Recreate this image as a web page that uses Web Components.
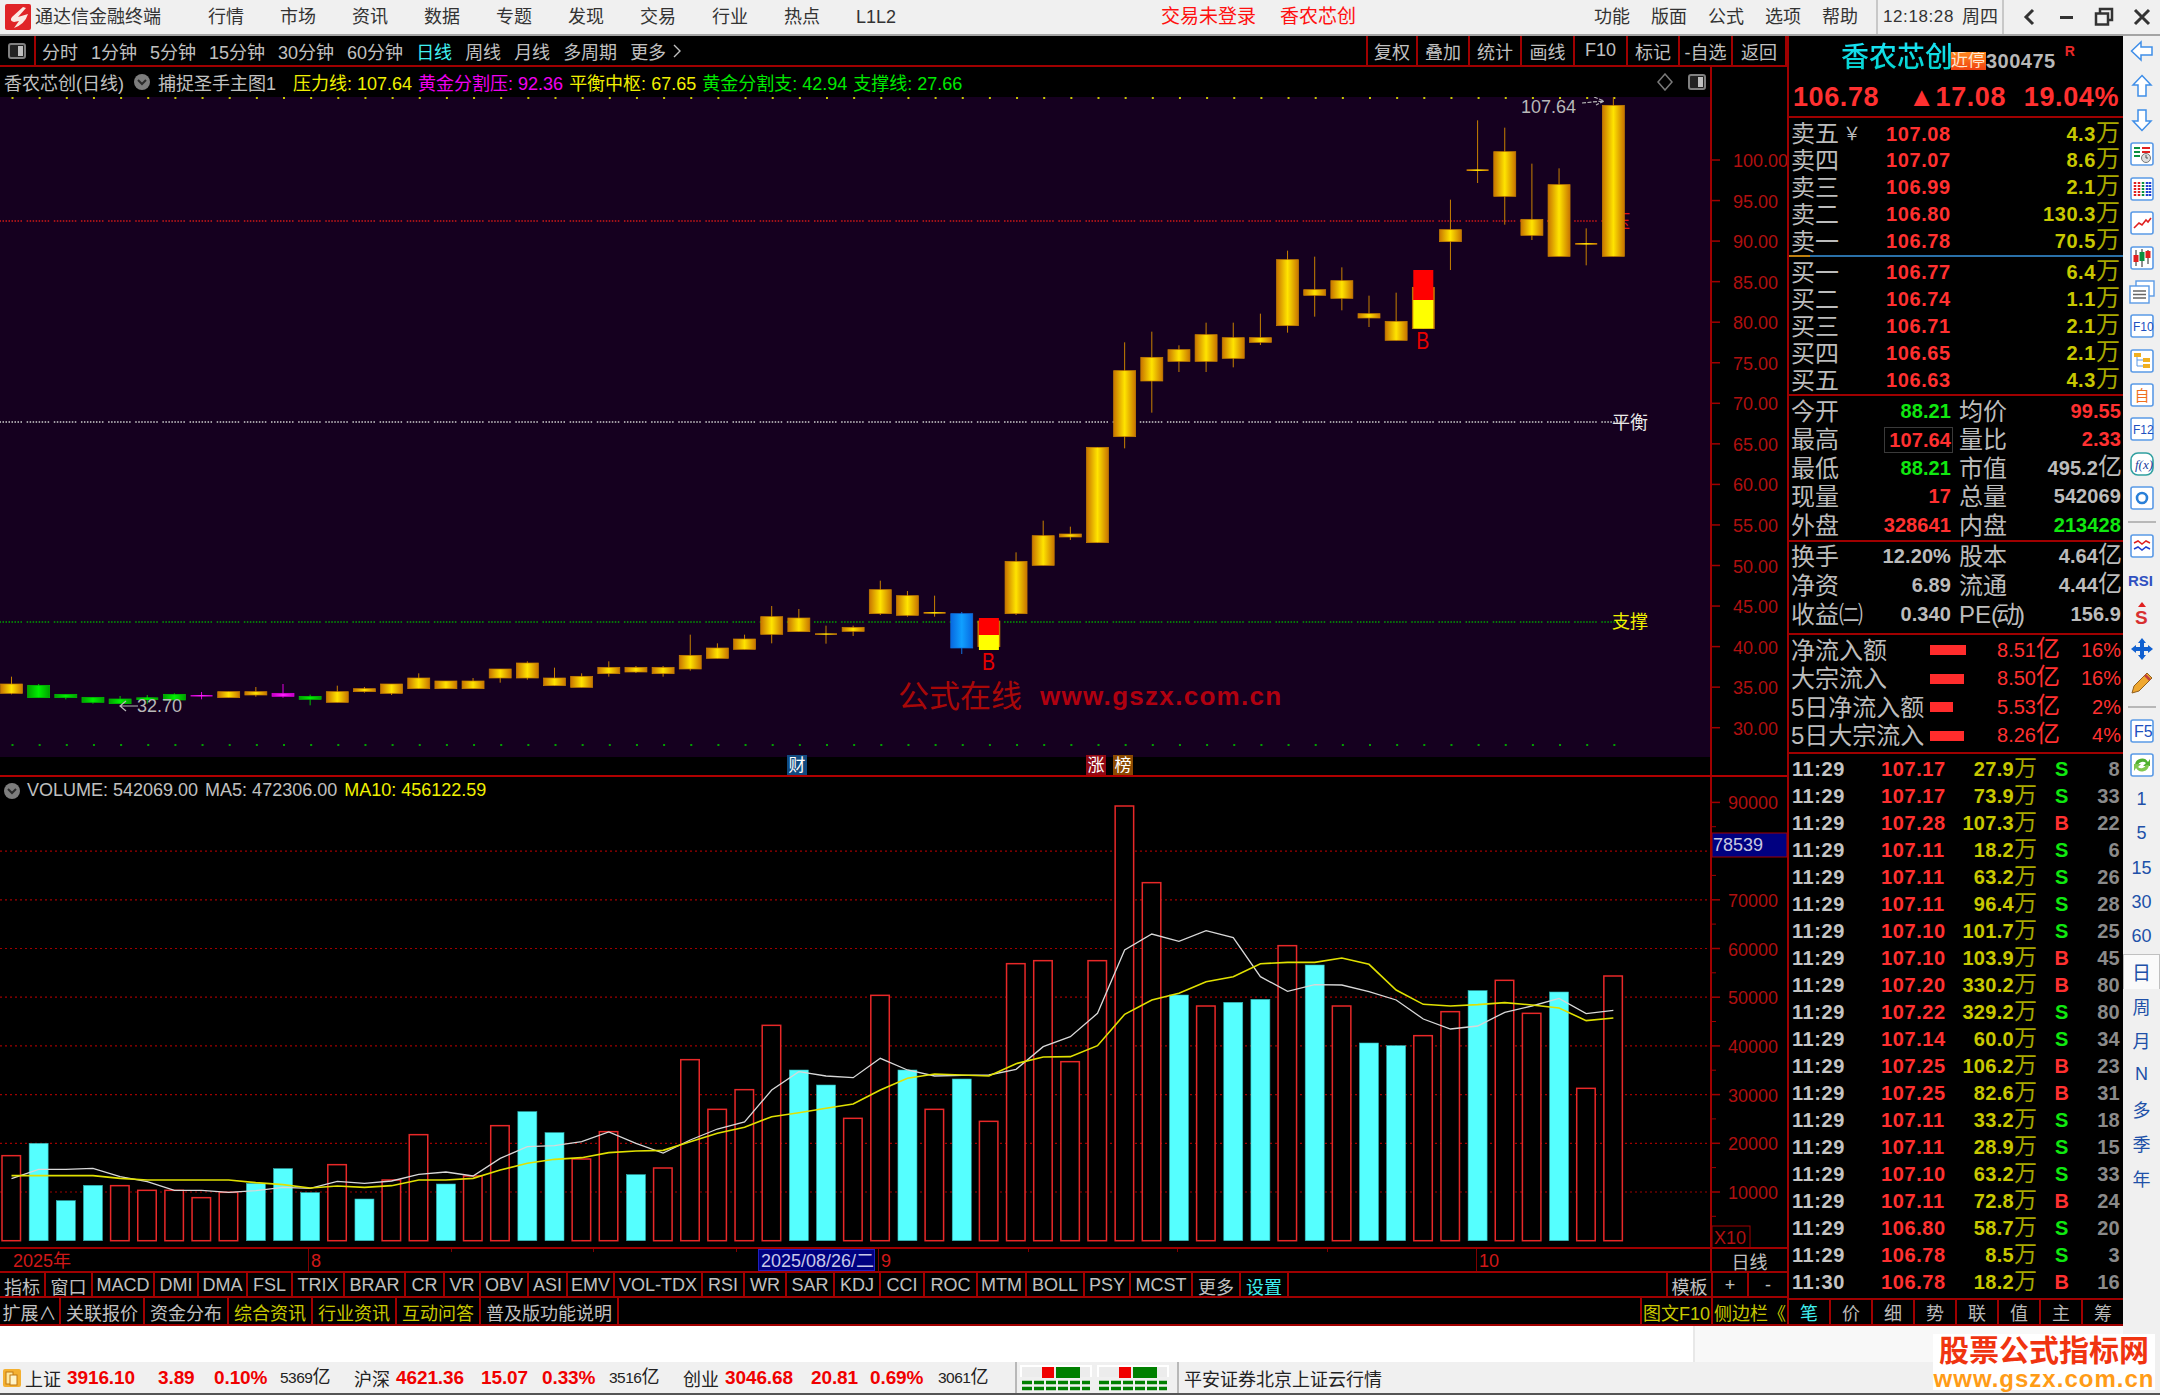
<!DOCTYPE html>
<html lang="zh">
<head>
<meta charset="utf-8">
<title>通达信金融终端</title>
<style>
    html, body { margin: 0; padding: 0; background: #000; }
    body { width: 2160px; height: 1395px; overflow: hidden; font-family: "Liberation Sans", "Noto Sans CJK SC", sans-serif; }
    tdx-app { color: #c0c0c0; }
</style>
</head>
<body>

<tdx-app>
    <title-bar slot="top"></title-bar>

    <work-area slot="work">
        <cell-row h="31">
            <icon-cell w="36"></icon-cell>
            <gap-text>分时</gap-text><gap-text>1分钟</gap-text><gap-text>5分钟</gap-text><gap-text>15分钟</gap-text><gap-text>30分钟</gap-text><gap-text>60分钟</gap-text><gap-text c="#40f0f0">日线</gap-text><gap-text>周线</gap-text><gap-text>月线</gap-text><gap-text>多周期</gap-text><gap-text>更多<svg width="14" height="16" viewBox="0 0 14 16" style="margin-left:4px"><path d="M4 2 L10 8 L4 14" fill="none" stroke="#c0c0c0" stroke-width="1.4"/></svg></gap-text>
            <bar-cell w="0" push></bar-cell>
            <bar-cell w="52" left>复权</bar-cell><bar-cell w="52">叠加</bar-cell><bar-cell w="52">统计</bar-cell><bar-cell w="53">画线</bar-cell><bar-cell w="53">F10</bar-cell><bar-cell w="52">标记</bar-cell><bar-cell w="53">-自选</bar-cell><bar-cell w="54">返回</bar-cell>
        </cell-row>
        <info-line></info-line>
        <kline-chart></kline-chart>
        <volume-chart></volume-chart>
        <date-axis></date-axis>
        <cell-row h="25" pt="2">
            <bar-cell w="46">指标</bar-cell><bar-cell w="47">窗口</bar-cell><bar-cell w="62">MACD</bar-cell><bar-cell w="44">DMI</bar-cell><bar-cell w="49">DMA</bar-cell><bar-cell w="45">FSL</bar-cell><bar-cell w="52">TRIX</bar-cell><bar-cell w="61">BRAR</bar-cell><bar-cell w="39">CR</bar-cell><bar-cell w="36">VR</bar-cell><bar-cell w="48">OBV</bar-cell><bar-cell w="39">ASI</bar-cell><bar-cell w="47">EMV</bar-cell><bar-cell w="88">VOL-TDX</bar-cell><bar-cell w="42">RSI</bar-cell><bar-cell w="42">WR</bar-cell><bar-cell w="48">SAR</bar-cell><bar-cell w="46">KDJ</bar-cell><bar-cell w="44">CCI</bar-cell><bar-cell w="53">ROC</bar-cell><bar-cell w="49">MTM</bar-cell><bar-cell w="58">BOLL</bar-cell><bar-cell w="46">PSY</bar-cell><bar-cell w="62">MCST</bar-cell><bar-cell w="48">更多</bar-cell><bar-cell w="48" c="#40f0f0">设置</bar-cell>
            <bar-cell w="0" push></bar-cell>
            <bar-cell w="47" left>模板</bar-cell><bar-cell w="36">+</bar-cell><bar-cell w="38" last>-</bar-cell>
        </cell-row>
        <cell-row h="28" pt="2">
            <bar-cell w="61">扩展∧</bar-cell><bar-cell w="84">关联报价</bar-cell><bar-cell w="84">资金分布</bar-cell><bar-cell w="84" c="#c8c800">综合资讯</bar-cell><bar-cell w="84" c="#c8c800">行业资讯</bar-cell><bar-cell w="84" c="#c8c800">互动问答</bar-cell><bar-cell w="138">普及版功能说明</bar-cell>
            <bar-cell w="0" push></bar-cell>
            <bar-cell w="73" left c="#c8c800">图文F10</bar-cell><bar-cell w="74" last c="#c8c800">侧边栏《</bar-cell>
        </cell-row>
    </work-area>

    <quote-panel slot="quote"></quote-panel>
    <side-bar slot="side"></side-bar>
    <status-bar slot="bottom"></status-bar>
    <brand-mark slot="over"></brand-mark>
</tdx-app>

<script>
const NS = '"Liberation Sans", "Noto Sans CJK SC", sans-serif';

class TdxApp extends HTMLElement {
    constructor() {
        super();
        this.attachShadow({ mode: 'open' });
    }
    connectedCallback() {
        this.shadowRoot.innerHTML = `
            <style>
                :host { display: flex; flex-direction: column; width: 2160px; height: 1395px; position: relative; font-family: ${NS}; }
                .mid { display: flex; height: 1326px; flex: none; }
                .left { display: flex; flex-direction: column; width: 2123px; }
                .deck { display: flex; height: 1290px; }
                .blank { flex: 1; background: linear-gradient(90deg, #fff 1693px, #e8e8e8 1693px 1695px, #f8f8f8 1695px); }
            </style>
            <slot name="top"></slot>
            <div class="mid">
                <div class="left">
                    <div class="deck">
                        <slot name="work"></slot>
                        <slot name="quote"></slot>
                    </div>
                    <div class="blank"></div>
                </div>
                <slot name="side"></slot>
            </div>
            <slot name="bottom"></slot>
            <slot name="over"></slot>
        `;
    }
}

class TitleBar extends HTMLElement {
    constructor() {
        super();
        this.attachShadow({ mode: 'open' });
    }
    connectedCallback() {
        const nav = ['行情', '市场', '资讯', '数据', '专题', '发现', '交易', '行业', '热点', 'L1L2'];
        const right = ['功能', '版面', '公式', '选项', '帮助'];
        this.shadowRoot.innerHTML = `
            <style>
                :host { display: flex; align-items: center; height: 34px; flex: none; background: #f0f0f0; border-bottom: 2px solid #a4a4a4; color: #333; font-size: 18px; line-height: 24px; white-space: nowrap; }
                .logo { margin-left: 5px; width: 26px; height: 26px; flex: none; }
                .name { margin-left: 4px; width: 127px; }
                .nav { display: flex; gap: 36px; margin-left: 46px; width: 690px; }
                .warn { display: flex; gap: 24px; margin-left: 263px; color: #ff1010; font-size: 19px; width: 433px; }
                .right { display: flex; gap: 21px; }
                .clock { display: flex; align-items: center; height: 34px; margin-left: 18px; padding-left: 5px; width: 119px; border-left: 2px solid #c8c8c8; border-right: 2px solid #c8c8c8; font-size: 17px; letter-spacing: .6px; }
                .clock b { font-weight: 400; font-size: 18px; margin-left: 8px; letter-spacing: 0; }
                .win { display: flex; align-items: center; gap: 18px; margin-left: 16px; }
                svg { display: block; flex: none; }
            </style>
            <svg class="logo" viewBox="0 0 26 26">
                <rect width="26" height="26" rx="2" fill="#e02428"/>
                <path d="M18 3 L7 13 Q4 17 9 18 L14 17 L9 24 Q20 20 23 10 L13 13 L21 4 Z" fill="#fbe9e4"/>
            </svg>
            <span class="name">通达信金融终端</span>
            <div class="nav">${nav.map(t => `<span>${t}</span>`).join('')}</div>
            <div class="warn"><span>交易未登录</span><span>香农芯创</span></div>
            <div class="right">${right.map(t => `<span>${t}</span>`).join('')}</div>
            <div class="clock">12:18:28<b>周四</b></div>
            <div class="win">
                <svg width="20" height="20" viewBox="0 0 20 20"><path d="M13 3 L6 10 L13 17" fill="none" stroke="#333" stroke-width="3"/></svg>
                <svg width="18" height="20" viewBox="0 0 18 20"><rect x="2" y="9" width="13" height="3" fill="#333"/></svg>
                <svg width="20" height="20" viewBox="0 0 20 20"><path d="M6 6 V2 H18 V13 H14" fill="none" stroke="#333" stroke-width="2.5"/><rect x="2" y="6.5" width="12" height="11" fill="none" stroke="#333" stroke-width="2.5"/></svg>
                <svg width="20" height="20" viewBox="0 0 20 20"><path d="M3 3 L17 17 M17 3 L3 17" stroke="#333" stroke-width="3"/></svg>
            </div>
        `;
    }
}

class WorkArea extends HTMLElement {
    constructor() {
        super();
        this.attachShadow({ mode: 'open' });
    }
    connectedCallback() {
        this.shadowRoot.innerHTML = `
            <style>
                :host { display: flex; flex-direction: column; width: 1787px; flex: none; background: #000; }
            </style>
            <slot></slot>
        `;
    }
}

class CellRow extends HTMLElement {
    constructor() {
        super();
        this.attachShadow({ mode: 'open' });
    }
    connectedCallback() {
        const h = this.getAttribute('h');
        const pt = this.getAttribute('pt') || 0;
        this.shadowRoot.innerHTML = `
            <style>
                :host { display: flex; align-items: stretch; height: ${h}px; flex: none; box-sizing: border-box; border-bottom: 2px solid #a00000; background: #000; font-size: 18px; --cell-pt: ${pt}px; }
            </style>
            <slot></slot>
        `;
    }
}

class BarCell extends HTMLElement {
    constructor() {
        super();
        this.attachShadow({ mode: 'open' });
    }
    connectedCallback() {
        const w = this.getAttribute('w');
        const c = this.getAttribute('c') || '#c0c0c0';
        const push = this.hasAttribute('push');
        const last = this.hasAttribute('last');
        const left = this.hasAttribute('left');
        this.shadowRoot.innerHTML = `
            <style>
                :host { display: flex; align-items: center; justify-content: center; box-sizing: border-box; flex: ${push ? '1' : 'none'}; width: ${w}px; color: ${c}; font-size: 18px; white-space: nowrap; overflow: hidden; padding-top: var(--cell-pt, 0);
                    border-right: ${push || last ? '0' : '2px solid #a00000'}; border-left: ${left ? '2px solid #a00000' : '0'}; }
            </style>
            <slot></slot>
        `;
    }
}

class IconCell extends HTMLElement {
    constructor() {
        super();
        this.attachShadow({ mode: 'open' });
    }
    connectedCallback() {
        const w = this.getAttribute('w');
        this.shadowRoot.innerHTML = `
            <style>
                :host { display: flex; align-items: center; justify-content: center; box-sizing: border-box; width: ${w}px; border-right: 2px solid #a00000; margin-right: 6px; flex: none; }
            </style>
            <svg width="18" height="16" viewBox="0 0 18 16">
                <rect x="1" y="1" width="16" height="14" rx="2" fill="#222" stroke="#808080" stroke-width="2"/>
                <rect x="10" y="3" width="5" height="10" fill="#c0c0c0"/>
            </svg>
        `;
    }
}

class GapText extends HTMLElement {
    constructor() {
        super();
        this.attachShadow({ mode: 'open' });
    }
    connectedCallback() {
        const c = this.getAttribute('c') || '#c0c0c0';
        this.shadowRoot.innerHTML = `
            <style>
                :host { display: flex; align-items: center; margin-right: 13px; color: ${c}; font-size: 18px; white-space: nowrap; flex: none; }
            </style>
            <slot></slot>
        `;
    }
}

class InfoLine extends HTMLElement {
    constructor() {
        super();
        this.attachShadow({ mode: 'open' });
    }
    connectedCallback() {
        this.shadowRoot.innerHTML = `
            <style>
                :host { display: flex; align-items: center; height: 30px; width: 1712px; box-sizing: border-box; flex: none; border-right: 2px solid #a00000; padding-left: 4px; font-size: 18px; white-space: nowrap; color: #c0c0c0; }
                svg { flex: none; display: block; }
                .dot { margin: 0 7px 0 9px; }
                .y { color: #f0f000; } .m { color: #f000f0; } .g { color: #00e800; }
                .items { display: flex; gap: 6px; margin-left: 17px; }
                .tools { margin-left: auto; display: flex; align-items: center; gap: 14px; padding-right: 4px; }
            </style>
            <span>香农芯创(日线)</span>
            <svg class="dot" width="18" height="18" viewBox="0 0 18 18"><circle cx="9" cy="9" r="8" fill="#7d7d7d"/><path d="M5 7 L9 11 L13 7" fill="none" stroke="#2a2a2a" stroke-width="2"/></svg>
            <span>捕捉圣手主图1</span>
            <div class="items">
                <span class="y">压力线: 107.64</span>
                <span class="m">黄金分割压: 92.36</span>
                <span class="y">平衡中枢: 67.65</span>
                <span class="g">黄金分割支: 42.94</span>
                <span class="g">支撑线: 27.66</span>
            </div>
            <div class="tools">
                <svg width="18" height="18" viewBox="0 0 18 18"><path d="M9 1 L16 9 L9 17 L2 9 Z" fill="none" stroke="#7a7a7a" stroke-width="1.5"/></svg>
                <svg width="18" height="16" viewBox="0 0 18 16"><rect x="1" y="1" width="16" height="14" rx="2" fill="#222" stroke="#808080" stroke-width="2"/><rect x="10" y="3" width="5" height="10" fill="#c0c0c0"/></svg>
            </div>
        `;
    }
}

// x centre of each of the 60 trading days
const dayX = i => 11.5 + 27.15 * i;

// type, wick top, body top, body bottom, wick bottom
const early = [ // y = 540 + v / 3
    ['g', 410, 432, 460, 463], ['v', 432, 436, 473, 473], ['v', 463, 463, 473, 478], ['v', 472, 472, 487, 491],
    ['v', 468, 477, 491, 491], ['v', 465, 472, 480, 491], ['v', 460, 463, 480, 485], ['m', 456, 465, 467, 478],
    ['g', 455, 455, 473, 473], ['g', 441, 455, 465, 470], ['m', 432, 460, 469, 473], ['v', 464, 469, 478, 496],
    ['g', 437, 455, 487, 487], ['g', 441, 446, 455, 458], ['g', 432, 432, 460, 465], ['g', 400, 414, 446, 446],
    ['g', 423, 423, 446, 446], ['g', 414, 423, 446, 446], ['g', 387, 387, 414, 428], ['g', 364, 369, 414, 419],
    ['g', 383, 414, 437, 437], ['g', 400, 409, 442, 442], ['g', 364, 382, 401, 410], ['g', 378, 382, 396, 399],
    ['g', 378, 382, 401, 410], ['g', 284, 346, 387, 392], ['g', 310, 324, 355, 355], ['g', 284, 297, 328, 328],
    ['g', 198, 230, 283, 310], ['g', 207, 234, 275, 275], ['g', 257, 280, 284, 311], ['g', 257, 262, 274, 288],
    ['g', 122, 149, 221, 225], ['g', 153, 167, 226, 230], ['g', 167, 216, 221, 230], ['b', 216, 221, 324, 342],
    ['g', 243, 243, 320, 320], ['g', 37, 64, 221, 225]
];
const late = [ // y = 90 + v / 3
    ['g', 1292, 1337, 1426, 1426], ['g', 1310, 1332, 1341, 1350], ['g', 1072, 1072, 1358, 1358], ['g', 757, 842, 1040, 1075],
    ['g', 725, 802, 873, 968], ['g', 766, 779, 814, 846], ['g', 698, 734, 814, 846], ['g', 698, 743, 805, 832],
    ['g', 671, 743, 757, 765], ['g', 482, 509, 707, 728], ['g', 500, 599, 616, 680], ['g', 532, 572, 625, 661],
    ['g', 617, 671, 684, 711], ['g', 608, 694, 751, 751], ['g', 592, 592, 716, 716], ['g', 329, 419, 455, 540],
    ['g', 91, 238, 243, 279], ['g', 113, 185, 319, 404], ['g', 221, 388, 436, 450], ['g', 235, 284, 499, 499],
    ['g', 415, 459, 464, 526], ['g', 22, 46, 499, 499]
];

class KlineChart extends HTMLElement {
    constructor() {
        super();
        this.attachShadow({ mode: 'open' });
    }
    candles() {
        const wick = { g: '#c88000', v: '#00c000', m: '#e000e0', b: '#1070e0' };
        const rows = [
            ...early.map(r => [r[0], ...r.slice(1).map(v => 540 + v / 3)]),
            ...late.map(r => [r[0], ...r.slice(1).map(v => 90 + v / 3)])
        ];
        return rows.map((r, i) => {
            const x = dayX(i);
            const [t, wt, bt, bb, wb] = r;
            const h = Math.max(bb - bt, 1.5);
            return `<line x1="${x}" x2="${x}" y1="${wt}" y2="${wb}" stroke="${wick[t]}" stroke-width="1"/>` +
                `<rect x="${x - 11}" y="${bt}" width="22" height="${h}" fill="url(#c${t})" stroke="${h < 3 ? 'none' : wick[t]}" stroke-width=".7"/>`;
        }).join('');
    }
    dotted(y, color) {
        let out = '';
        for (let i = 0; i < 60; i++) {
            out += `<line x1="${dayX(i) - 12}" x2="${dayX(i) + 12}" y1="${y}" y2="${y}" stroke="${color}" stroke-width="1.5" stroke-dasharray="1.5 1.5"/>`;
        }
        return out;
    }
    connectedCallback() {
        let ticks = '';
        for (let i = 0; i < 60; i++) {
            ticks += `<rect x="${dayX(i)}" y="97" width="2" height="2" fill="#c8c800"/><rect x="${dayX(i)}" y="744" width="2" height="2" fill="#00a000"/>`;
        }
        let axis = '';
        for (let p = 100; p >= 30; p -= 5) {
            const y = 160 + (100 - p) * 8.11;
            axis += `<line x1="1712" x2="1720" y1="${y}" y2="${y}" stroke="#a00000" stroke-width="1.5"/>` +
                `<text x="1733" y="${y + 7}" class="ax">${p.toFixed(2)}</text>`;
        }
        const grad = (id, a, b) => `<linearGradient id="${id}"><stop offset="0" stop-color="${a}"/><stop offset=".5" stop-color="${b}"/><stop offset="1" stop-color="${a}"/></linearGradient>`;
        this.shadowRoot.innerHTML = `
            <style>
                :host { display: block; width: 1787px; height: 680px; flex: none; background: #000; }
                svg { display: block; }
                text { font-family: ${NS}; font-size: 18px; }
                .ax { fill: #b01010; }
                .badge { font-size: 17px; fill: #fff; }
            </style>
            <svg width="1787" height="680" viewBox="0 97 1787 680">
                <defs>
                    ${grad('cg', '#c87400', '#ffe400')}
                    ${grad('cv', '#00a000', '#00f000')}
                    ${grad('cm', '#c000c0', '#ff20ff')}
                    ${grad('cb', '#0868e0', '#10a0ff')}
                </defs>
                <rect x="0" y="97" width="1711" height="660" fill="#15001f"/>
                ${ticks}
                ${this.dotted(221, '#d01818')}
                ${this.dotted(422, '#d0d0d0')}
                ${this.dotted(622, '#00a000')}
                <text x="1612" y="228" fill="#e01010">压</text>
                <text x="1612" y="429" fill="#e8e8e8">平衡</text>
                <text x="1612" y="628" fill="#f0f000">支撑</text>
                ${this.candles()}
                <rect x="${dayX(36) - 10}" y="618" width="20" height="17" fill="#ff0000"/>
                <rect x="${dayX(36) - 10}" y="635" width="20" height="15" fill="#ffff00"/>
                <text x="${dayX(36) - 7}" y="670" fill="#e80000" style="font-size:24px" textLength="13" lengthAdjust="spacingAndGlyphs">B</text>
                <rect x="${dayX(52) - 10}" y="270" width="20" height="30" fill="#ff0000"/>
                <rect x="${dayX(52) - 10}" y="300" width="20" height="28.5" fill="#ffff00"/>
                <text x="${dayX(52) - 7}" y="349" fill="#e80000" style="font-size:24px" textLength="13" lengthAdjust="spacingAndGlyphs">B</text>
                <text x="1521" y="113" fill="#b8b8b8">107.64</text>
                <path d="M1582 103 L1603 101 M1594 97 L1604 101 L1596 105" fill="none" stroke="#b8b8b8" stroke-width="1.2" stroke-dasharray="4 1.5"/>
                <text x="137" y="712" fill="#b8b8b8">32.70</text>
                <path d="M138 706 H120 M126 701 L120 706 L126 711" fill="none" stroke="#b8b8b8" stroke-width="1.2"/>
                <text x="898" y="707" fill="#a80808" style="font-size:31px">公式在线</text>
                <text x="1040" y="705" fill="#b00010" style="font-size:26px;font-weight:700;letter-spacing:1.3px">www.gszx.com.cn</text>
                ${axis}
                <rect x="1710" y="97" width="2" height="680" fill="#a00000"/>
                <rect x="787" y="755" width="20" height="20" fill="#104a80"/>
                <text x="788.5" y="771" class="badge">财</text>
                <rect x="1086" y="755" width="20" height="20" fill="#900814"/>
                <text x="1087.5" y="771" class="badge">涨</text>
                <rect x="1113" y="755" width="20" height="20" fill="#8a4800"/>
                <text x="1114.5" y="771" class="badge">榜</text>
                <rect x="0" y="775" width="1787" height="2" fill="#b00000"/>
            </svg>
        `;
    }
}

class VolumeChart extends HTMLElement {
    constructor() {
        super();
        this.attachShadow({ mode: 'open' });
    }
    connectedCallback() {
        const yOf = v => 780 + v / 3;
        // c = cyan (down day), r = hollow red (up day); bar top as v
        const bars = ['r1127', 'c1090', 'c1262', 'c1216', 'r1217', 'r1231', 'r1231', 'r1253', 'r1237', 'c1210', 'c1166', 'c1238', 'r1154', 'c1257', 'r1200', 'r1064', 'c1212', 'r1188', 'r1037', 'c995', 'c1058', 'r1137', 'r1055', 'c1184', 'r1164', 'r839', 'r988', 'r929', 'r736', 'c870', 'c915', 'r1015', 'r646', 'c870', 'r988', 'c897', 'r1024', 'r551', 'r542', 'r845', 'r542', 'r78', 'r308', 'c645', 'r678', 'c667', 'c658', 'r497', 'c555', 'r678', 'c789', 'c797', 'r767', 'r695', 'c632', 'r601', 'r700', 'c636', 'r925', 'r588'];
        const ma5 = [1196, 1168, 1168, 1165, 1190, 1205, 1231, 1231, 1237, 1232, 1222, 1225, 1204, 1210, 1203, 1183, 1176, 1188, 1135, 1100, 1097, 1085, 1056, 1090, 1119, 1080, 1047, 1026, 930, 875, 888, 893, 835, 870, 888, 886, 885, 868, 800, 770, 700, 510, 462, 484, 452, 473, 590, 634, 614, 615, 635, 660, 717, 747, 738, 697, 678, 655, 701, 691];
        const ma10 = [1187, 1187, 1187, 1187, 1195, 1200, 1200, 1200, 1200, 1208, 1214, 1224, 1218, 1222, 1217, 1200, 1200, 1195, 1170, 1150, 1138, 1133, 1118, 1113, 1111, 1085, 1060, 1042, 1010, 998, 985, 972, 930, 895, 882, 885, 888, 851, 831, 830, 797, 703, 660, 640, 605, 590, 551, 547, 547, 534, 553, 630, 673, 678, 674, 668, 675, 684, 722, 714];
        const base = 1240.7;
        const barSvg = bars.map((b, i) => {
            const top = yOf(+b.slice(1));
            const x = dayX(i) - 9.5;
            return b[0] === 'c'
                ? `<rect x="${x}" y="${top}" width="19" height="${base - top}" fill="#55ffff" stroke="#30b0b0" stroke-width=".6"/>`
                : `<rect x="${x}" y="${top}" width="18.5" height="${base - top}" fill="#000" stroke="#e82828" stroke-width="1.5"/>`;
        }).join('');
        const pts = a => a.map((v, i) => `${dayX(i)},${yOf(v)}`).join(' ');
        let grid = '';
        let axis = '';
        for (let n = 1; n <= 9; n++) {
            const y = base - n * 48.7;
            if (n < 9) grid += `<line x1="0" x2="1710" y1="${y}" y2="${y}" stroke="#a00000" stroke-width="1.2" stroke-dasharray="2 3"/>`;
            axis += `<line x1="1712" x2="1720" y1="${y}" y2="${y}" stroke="#a00000" stroke-width="1.5"/><line x1="1712" x2="1716" y1="${y + 24.3}" y2="${y + 24.3}" stroke="#a00000"/>`;
            if (n !== 8) axis += `<text x="1728" y="${y + 7}" class="ax">${n}0000</text>`;
        }
        this.shadowRoot.innerHTML = `
            <style>
                :host { display: block; position: relative; width: 1787px; height: 472px; flex: none; background: #000; }
                svg { display: block; }
                text { font-family: ${NS}; font-size: 18px; }
                .ax { fill: #b01010; }
                .head { position: absolute; left: 3px; top: 3px; display: flex; align-items: center; gap: 7px; font-size: 18px; white-space: nowrap; color: #c0c0c0; }
                .head svg { flex: none; margin-right: -1px; }
                .y { color: #f0f000; }
            </style>
            <svg width="1787" height="472" viewBox="0 777 1787 472">
                ${grid}
                ${barSvg}
                <polyline points="${pts(ma5)}" fill="none" stroke="#d8d8d8" stroke-width="1.3"/>
                <polyline points="${pts(ma10)}" fill="none" stroke="#e0e000" stroke-width="1.6"/>
                ${axis}
                <rect x="1710" y="777" width="2" height="472" fill="#a00000"/>
                <rect x="1712" y="833" width="75" height="24" fill="#000080" stroke="#a00000"/>
                <text x="1713" y="851" fill="#c8c8e0">78539</text>
                <rect x="1712" y="1226" width="38" height="23" fill="#000" stroke="#a00000"/>
                <text x="1714" y="1244" fill="#b01010">X10</text>
                <rect x="0" y="1247" width="1787" height="2" fill="#a00000"/>
            </svg>
            <div class="head">
                <svg width="18" height="18" viewBox="0 0 18 18"><circle cx="9" cy="9" r="8" fill="#7d7d7d"/><path d="M5 7 L9 11 L13 7" fill="none" stroke="#2a2a2a" stroke-width="2"/></svg>
                <span>VOLUME: 542069.00</span><span>MA5: 472306.00</span><span class="y">MA10: 456122.59</span>
            </div>
        `;
    }
}

class DateAxis extends HTMLElement {
    constructor() {
        super();
        this.attachShadow({ mode: 'open' });
    }
    connectedCallback() {
        this.shadowRoot.innerHTML = `
            <style>
                :host { display: flex; align-items: stretch; height: 24px; flex: none; box-sizing: border-box; border-bottom: 2px solid #a00000; font-size: 18px; color: #d01818; white-space: nowrap; }
                .track { position: relative; width: 1712px; flex: none; border-right: 2px solid #a00000; box-sizing: border-box; }
                span { position: absolute; top: 0; line-height: 24px; height: 22px; padding-left: 2px; border-left: 1px solid #800000; }
                .pick { background: #000080; color: #c8c8e8; border: 1px solid #2020c0; box-sizing: border-box; padding: 0 0 0 2px; width: 117px; line-height: 22px; }
                i { position: absolute; top: 0; width: 1px; height: 3px; background: #800000; }
                .label { flex: 1; display: flex; align-items: center; justify-content: center; color: #c0c0c0; padding-top: 2px; }
            </style>
            <div class="track">
                <span style="left:11px;border:0">2025年</span>
                <span style="left:308px">8</span>
                <span class="pick" style="left:758px">2025/08/26/二</span>
                <span style="left:878px">9</span>
                <span style="left:1476px">10</span>
                <i style="left:451px"></i><i style="left:593px"></i><i style="left:736px"></i><i style="left:1028px"></i><i style="left:1177px"></i><i style="left:1327px"></i>
            </div>
            <div class="label">日线</div>
        `;
    }
}

class QuotePanel extends HTMLElement {
    constructor() {
        super();
        this.attachShadow({ mode: 'open' });
    }
    connectedCallback() {
        const num = (v, u) => u ? `${v}<u>${u}</u>` : v;
        const sells = [['卖五', '107.08', '4.3'], ['卖四', '107.07', '8.6'], ['卖三', '106.99', '2.1'], ['卖二', '106.80', '130.3'], ['卖一', '106.78', '70.5']];
        const buys = [['买一', '106.77', '6.4'], ['买二', '106.74', '1.1'], ['买三', '106.71', '2.1'], ['买四', '106.65', '2.1'], ['买五', '106.63', '4.3']];
        const bookRow = r => `<div class="book"><label>${r[0]}${r[0] === '卖五' ? '<em>￥</em>' : ''}</label><b class="r">${r[1]}</b><b class="v">${num(r[2], '万')}</b></div>`;
        const stats = [
            ['今开', '88.21', 'g', '均价', '99.55', 'r'], ['最高', '107.64', 'r box', '量比', '2.33', 'r'], ['最低', '88.21', 'g', '市值', '495.2亿', 'w'],
            ['现量', '17', 'r', '总量', '542069', 'w'], ['外盘', '328641', 'r', '内盘', '213428', 'g']
        ];
        const stats2 = [['换手', '12.20%', 'w', '股本', '4.64亿', 'w'], ['净资', '6.89', 'w', '流通', '4.44亿', 'w'], ['收益㈡', '0.340', 'w', 'PE<span>(动)</span>', '156.9', 'w']];
        const statRow = r => {
            const fmt = s => s.endsWith('亿') ? num(s.slice(0, -1), '亿') : s;
            return `<div class="stat"><label>${r[0]}</label><b class="a ${r[2]}">${r[1]}</b><label class="l2">${r[3]}</label><b class="${r[5]}">${fmt(r[4])}</b></div>`;
        };
        const flows = [['净流入额', 36, '8.51', '16%'], ['大宗流入', 34, '8.50', '16%'], ['5日净流入额', 23, '5.53', '2%'], ['5日大宗流入', 34, '8.26', '4%']];
        const ticks = [
            ['11:29', '107.17', '27.9', 'S', '8'], ['11:29', '107.17', '73.9', 'S', '33'], ['11:29', '107.28', '107.3', 'B', '22'], ['11:29', '107.11', '18.2', 'S', '6'],
            ['11:29', '107.11', '63.2', 'S', '26'], ['11:29', '107.11', '96.4', 'S', '28'], ['11:29', '107.10', '101.7', 'S', '25'], ['11:29', '107.10', '103.9', 'B', '45'],
            ['11:29', '107.20', '330.2', 'B', '80'], ['11:29', '107.22', '329.2', 'S', '80'], ['11:29', '107.14', '60.0', 'S', '34'], ['11:29', '107.25', '106.2', 'B', '23'],
            ['11:29', '107.25', '82.6', 'B', '31'], ['11:29', '107.11', '33.2', 'S', '18'], ['11:29', '107.11', '28.9', 'S', '15'], ['11:29', '107.10', '63.2', 'S', '33'],
            ['11:29', '107.11', '72.8', 'B', '24'], ['11:29', '106.80', '58.7', 'S', '20'], ['11:29', '106.78', '8.5', 'S', '3'], ['11:30', '106.78', '18.2', 'B', '16']
        ];
        const tabs = ['笔', '价', '细', '势', '联', '值', '主', '筹'];
        this.shadowRoot.innerHTML = `
            <style>
                :host { display: flex; flex-direction: column; width: 336px; flex: none; box-sizing: border-box; border-left: 2px solid #a00000; background: #000; color: #bcbcbc; white-space: nowrap; font-size: 24px; }
                b { font-weight: 700; font-size: 20px; letter-spacing: .6px; line-height: 27px; }
                u { text-decoration: none; font-weight: 400; font-size: 24px; letter-spacing: -1px; line-height: 0; }
                label { font-size: 24px; font-weight: 400; line-height: 27px; }
                .r { color: #ff3030; } .g { color: #10e810; } .w { color: #bcbcbc; }
                .name { display: flex; align-items: center; height: 38px; padding-left: 52px; flex: none; }
                .name strong { font-weight: 500; font-size: 28px; width: 110px; background: linear-gradient(#20e8ff, #00d0c8); -webkit-background-clip: text; background-clip: text; color: transparent; }
                .name i { font-style: normal; font-size: 17px; background: linear-gradient(#ff8a20, #f04010); color: #ffe8d0; width: 35px; height: 18px; line-height: 18px; overflow: hidden; margin-top: 12px; }
                .name b { font-size: 20px; margin-top: 12px; letter-spacing: .5px; color: #b8b8b8; }
                .name s { text-decoration: none; color: #e82828; font-size: 14px; font-weight: 700; margin: -8px 0 0 9px; }
                .price { display: flex; align-items: center; height: 44px; box-sizing: border-box; flex: none; padding: 4px 4px 0 4px; color: #ff3030; font-weight: 700; font-size: 27px; letter-spacing: .6px; border-bottom: 2px solid #a00000; }
                .price span:nth-child(2) { margin-left: 29px; }
                .price span:nth-child(3) { margin-left: auto; }
                .book { display: grid; grid-template-columns: 95px 70px 1fr; align-items: center; height: 27px; padding: 0 4px 0 2px; flex: none; }
                .book b.v { text-align: right; color: #c8c800; }
                .book u { color: #a8a800; }
                em { font-style: normal; font-size: 18px; margin-left: 4px; vertical-align: 2px; }
                .sells { padding-top: 2px; height: 137px; flex: none; box-sizing: border-box; }
                .mid { height: 2px; flex: none; background: linear-gradient(90deg, #c08010 0 21px, #2a70a8 21px); }
                .buys { padding-top: 1.5px; height: 139px; flex: none; box-sizing: border-box; border-bottom: 2px solid #a00000; }
                .stat { display: grid; grid-template-columns: 160px 8px 62px 1fr; align-items: center; height: 28.55px; padding: 0 2px 0 2px; position: relative; }
                .stat b { text-align: right; letter-spacing: .1px; }
                .stat label:first-child { grid-column: 1; grid-row: 1; }
                .stat b.a { grid-column: 1; grid-row: 1; }
                .stat .l2 { grid-column: 3; overflow: visible; }
                .stat .l2 span { letter-spacing: -3px; }
                .stat b:last-child { grid-column: 4; grid-row: 1; }
                .stat u { letter-spacing: -1px; }
                .box { outline: 1.5px solid #3a3a3a; justify-self: end; outline-offset: 1px; line-height: 22px; padding-left: 3px; }
                .group { box-sizing: border-box; flex: none; border-bottom: 2px solid #a00000; }
                .flow { display: grid; grid-template-columns: 139px 60px 70px 1fr; align-items: center; height: 28.5px; padding: 0 2px; color: #bcbcbc; }
                .flow i { display: block; height: 10px; background: #ff2c2c; }
                .flow span { text-align: right; color: #ff3030; font-size: 20px; font-weight: 400; line-height: 27px; }
                .flow span u { letter-spacing: 0; }
                .tick { display: grid; grid-template-columns: 91px 66px 89px 52px 1fr; height: 27px; align-items: center; padding: 0 3px 0 1px; }
                .tick .t { color: #c4c4c4; letter-spacing: .6px; padding-left: 2px; }
                .tick .v { text-align: right; color: #c8c800; letter-spacing: .3px; }
                .tick u { color: #a8a800; font-size: 23px; }
                .tick .s { text-align: center; }
                .tick .c { text-align: right; color: #8a8a8a; letter-spacing: .3px; }
                .ticks { height: 544px; flex: none; box-sizing: border-box; padding-top: 1.5px; }
                .tabs { display: flex; height: 28px; flex: none; box-sizing: border-box; border-top: 2px solid #a00000; border-bottom: 2px solid #a00000; font-size: 18px; color: #b8b8b8; }
                .tabs span { flex: 1; display: flex; align-items: center; justify-content: center; border-right: 2px solid #a00000; }
                .tabs span:last-child { border-right: 0; }
                .tabs span:first-child { color: #40f0f0; }
            </style>
            <div class="name"><strong>香农芯创</strong><i>近停</i><b>300475</b><s>R</s></div>
            <div class="price"><span>106.78</span><span>▲17.08</span><span>19.04%</span></div>
            <div class="sells">${sells.map(bookRow).join('')}</div>
            <div class="mid"></div>
            <div class="buys">${buys.map(bookRow).join('')}</div>
            <div class="group" style="height:146px;padding-top:1px">${stats.map(statRow).join('')}</div>
            <div class="group" style="height:93px;padding-top:.7px">${stats2.map(statRow).join('')}</div>
            <div class="group" style="height:119px;padding-top:1px">${flows.map(f => `<div class="flow"><label>${f[0]}</label><i style="width:${f[1]}px"></i><span>${num(f[2], '亿')}</span><span>${f[3]}</span></div>`).join('')}</div>
            <div class="ticks">${ticks.map(t => `<div class="tick"><b class="t">${t[0]}</b><b class="r">${t[1]}</b><b class="v">${num(t[2], '万')}</b><b class="s ${t[3] === 'S' ? 'g' : 'r'}">${t[3]}</b><b class="c">${t[4]}</b></div>`).join('')}</div>
            <div class="tabs">${tabs.map(t => `<span>${t}</span>`).join('')}</div>
        `;
    }
}

class SideBar extends HTMLElement {
    constructor() {
        super();
        this.attachShadow({ mode: 'open' });
    }
    tile(inner) {
        return `<svg width="24" height="24" viewBox="0 0 24 24"><rect x="1" y="1" width="22" height="22" rx="2" fill="#fff" stroke="#5a9ae6" stroke-width="1.6"/>${inner}</svg>`;
    }
    connectedCallback() {
        const tile = this.tile;
        const arrow = r => `<svg width="24" height="24" viewBox="0 0 24 24"><path transform="rotate(${r} 12 12)" d="M1.5 12 L11 3 V8 H22 V16 H11 V21 Z" fill="#fff" stroke="#3f8ee8" stroke-width="1.5"/></svg>`;
        const icons = [
            arrow(0), arrow(90), arrow(270),
            tile('<path d="M4 6h6M4 10h6M4 14h6" stroke="#0a9040" stroke-width="2"/><path d="M12 6h8M12 10h8" stroke="#e02020" stroke-width="2"/><circle cx="16" cy="16" r="4.5" fill="#ddd" stroke="#777"/><path d="M16 13v3h2" stroke="#555" fill="none"/>'),
            tile('<path d="M5 5v14M9 5v14" stroke="#e02020" stroke-width="2.5" stroke-dasharray="2 1"/><path d="M13 5v14" stroke="#0a9040" stroke-width="2.5" stroke-dasharray="2 1"/><path d="M17 5v14M20 5v14" stroke="#2040d0" stroke-width="2.5" stroke-dasharray="2 1"/>'),
            tile('<path d="M4 17 L9 12 L12 14 L16 9 L18 11 L21 7" fill="none" stroke="#e02020" stroke-width="1.6"/>'),
            tile('<path d="M6 4v16M12 3v18M18 4v14" stroke="#222"/><rect x="3.5" y="9" width="5" height="7" fill="#e02020"/><rect x="9.5" y="6" width="5" height="9" fill="#0a9040"/><rect x="15.5" y="5" width="5" height="7" fill="#e02020"/>'),
            '<svg width="26" height="24" viewBox="0 0 26 24"><rect x="7" y="1" width="18" height="15" fill="#fff" stroke="#5a9ae6" stroke-width="1.4"/><rect x="1" y="6" width="19" height="17" fill="#fff" stroke="#5a9ae6" stroke-width="1.4"/><path d="M4 11h13M4 14.5h13M4 18h13" stroke="#666" stroke-width="1.6"/></svg>',
            tile('<text x="3" y="17" font-size="12" font-family="Liberation Sans" fill="#2050c0">F10</text>'),
            tile('<rect x="4" y="4" width="7" height="4" fill="#f0b020"/><rect x="13" y="9" width="7" height="4" fill="#f0b020"/><rect x="13" y="15" width="7" height="4" fill="#f0b020"/><path d="M7 8v9h6M7 11h6" stroke="#5a9ae6" fill="none"/>'),
            tile('<text x="4.5" y="18" font-size="15" font-family="Noto Sans CJK SC" fill="#f07020">自</text>'),
            tile('<text x="3" y="17" font-size="12" font-family="Liberation Sans" fill="#2050c0">F12</text>'),
            '<svg width="24" height="24" viewBox="0 0 24 24"><rect x="1" y="1" width="22" height="22" rx="7" fill="#fff" stroke="#30a0a0" stroke-width="1.6"/><text x="5" y="17" font-size="13" font-style="italic" font-family="Liberation Serif" fill="#2040a0">f(x)</text></svg>',
            tile('<circle cx="12" cy="12" r="5" fill="none" stroke="#2a80d8" stroke-width="2.6"/>'),
            'sep',
            tile('<path d="M4 9 L8 7 L12 10 L16 7 L20 9" fill="none" stroke="#e02020" stroke-width="1.5"/><path d="M4 15 L8 13 L12 16 L16 13 L20 15" fill="none" stroke="#2040d0" stroke-width="1.5"/>'),
            '<svg width="30" height="24" viewBox="0 0 30 24"><text x="1" y="18" font-size="15" font-weight="700" font-family="Liberation Sans" fill="#3050c0">RSI</text></svg>',
            '<svg width="24" height="26" viewBox="0 0 24 26"><path d="M12 1 L16 6 H8 Z" fill="#e02020"/><text x="5" y="23" font-size="19" font-weight="700" font-family="Liberation Sans" fill="#d83030">S</text></svg>',
            '<svg width="24" height="24" viewBox="0 0 24 24"><path d="M12 1 L16 6 H14 V10 H18 V8 L23 12 L18 16 V14 H14 V18 H16 L12 23 L8 18 H10 V14 H6 V16 L1 12 L6 8 V10 H10 V6 H8 Z" fill="#1060d0"/></svg>',
            '<svg width="24" height="24" viewBox="0 0 24 24"><path d="M2 22 L4 15 L17 2 L22 7 L9 20 Z" fill="#f0a830" stroke="#906020"/><path d="M15 4 L20 9" stroke="#c04040" stroke-width="2.5"/></svg>',
            'sep',
            tile('<text x="4" y="18" font-size="16" font-family="Liberation Sans" fill="#2050c0">F5</text>'),
            tile('<path d="M5 12 A7 7 0 0 1 18 9 L20 6 V13 H13 L16 10 A5 5 0 0 0 8 12 Z" fill="#50b030"/><path d="M19 12 A7 7 0 0 1 6 15 L4 18 V11 H11 L8 14 A5 5 0 0 0 16 12 Z" fill="#80c850"/>')
        ];
        const words = ['1', '5', '15', '30', '60', '日', '周', '月', 'N', '多', '季', '年'];
        this.shadowRoot.innerHTML = `
            <style>
                :host { display: flex; flex-direction: column; align-items: stretch; width: 37px; flex: none; box-sizing: border-box; background: #f0f0f0; overflow: hidden; }
                div { height: 34.4px; flex: none; display: flex; align-items: center; justify-content: center; color: #2050a8; font-size: 18px; }
                .pad { height: 0; margin-top: -2px; }
                .sep { height: 13px; }
                .sep::after { content: ''; width: 28px; height: 1.5px; background: #b8b8b8; }
                .on { background: #fafafa; border: 1px solid #c0c0c0; border-bottom: 0; box-sizing: border-box; font-size: 19px; }
            </style>
            <div class="pad"></div>
            ${icons.map(i => i === 'sep' ? '<div class="sep"></div>' : `<div>${i}</div>`).join('')}
            ${words.map(w => `<div class="${w === '日' ? 'on' : ''}">${w}</div>`).join('')}
        `;
    }
}

class StatusBar extends HTMLElement {
    constructor() {
        super();
        this.attachShadow({ mode: 'open' });
    }
    connectedCallback() {
        // name, price, change, percent, amount, with the column widths of each
        const idx = (name, p, c, pct, amt, w) => `<span class="n">${name}</span><b style="width:${w[0]}px">${p}</b><b style="width:${w[1]}px">${c}</b><b style="width:${w[2]}px">${pct}</b><span class="a" style="width:${w[3]}px">${amt}<u>亿</u></span>`;
        this.shadowRoot.innerHTML = `
            <style>
                :host { display: flex; align-items: center; height: 33px; flex: none; box-sizing: border-box; background: #f0f0f0; position: relative; color: #222; font-size: 18px; white-space: nowrap; border-bottom: 2px solid #555; }
                .ico { margin: 0 3px 0 2px; flex: none; }
                .n { width: 42px; flex: none; }
                b { color: #f00000; font-size: 19px; flex: none; letter-spacing: -.1px; }
                .a { flex: none; font-size: 15.5px; letter-spacing: -.5px; box-sizing: border-box; }
                .a u { text-decoration: none; font-size: 18px; line-height: 0; }
                .sep { width: 2px; height: 31px; background: #b8b8b8; flex: none; }
                svg { display: block; flex: none; }
                .mini { display: flex; gap: 5px; margin: 0 8px 0 3px; }
                .txt { margin-left: 5px; font-size: 18px; color: #222; }
            </style>
            <svg class="ico" width="20" height="20" viewBox="0 0 20 20"><rect x="1" y="1" width="18" height="18" rx="2" fill="#f4b030"/><rect x="4" y="4" width="7" height="12" fill="#ffe8a0" stroke="#c07810"/><rect x="8" y="7" width="7" height="10" fill="#fff4c8" stroke="#c07810"/></svg>
            ${idx('上证', '3916.10', '3.89', '0.10%', '5369', [91, 56, 66, 74])}
            ${idx('沪深', '4621.36', '15.07', '0.33%', '3516', [85, 61, 67, 74])}
            ${idx('创业', '3046.68', '20.81', '0.69%', '3061', [86, 59, 68, 77])}
            <div class="sep"></div>
            <div class="mini">
                ${[0, 1].map(() => `<svg width="72" height="28" viewBox="0 0 72 28">
                    <rect x="0" y="1" width="72" height="12" fill="#fff"/><rect x="2" y="3" width="68" height="10" fill="#ececec"/>
                    <rect x="22" y="3" width="12" height="11" fill="#f00000"/><rect x="36" y="3" width="24" height="11" fill="#008000"/>
                    <path d="M2 18.5h68M2 24.5h68" stroke="#008000" stroke-width="3.6" stroke-dasharray="10 2"/>
                </svg>`).join('')}
            </div>
            <div class="sep"></div>
            <span class="txt">平安证券北京上证云行情</span>
        `;
    }
}

class BrandMark extends HTMLElement {
    constructor() {
        super();
        this.attachShadow({ mode: 'open' });
    }
    connectedCallback() {
        this.shadowRoot.innerHTML = `
            <style>
                :host { position: absolute; left: 1933px; top: 1334px; width: 222px; height: 56px; background: #fff; display: flex; flex-direction: column; align-items: center; font-weight: 700; white-space: nowrap; }
                .a { color: #f03410; font-size: 30px; line-height: 34px; letter-spacing: 0; }
                .b { color: #ff9c18; font-size: 24px; line-height: 22px; letter-spacing: 1px; }
            </style>
            <span class="a">股票公式指标网</span>
            <span class="b">www.gszx.com.cn</span>
        `;
    }
}

customElements.define('tdx-app', TdxApp);
customElements.define('title-bar', TitleBar);
customElements.define('work-area', WorkArea);
customElements.define('cell-row', CellRow);
customElements.define('bar-cell', BarCell);
customElements.define('icon-cell', IconCell);
customElements.define('gap-text', GapText);
customElements.define('info-line', InfoLine);
customElements.define('kline-chart', KlineChart);
customElements.define('volume-chart', VolumeChart);
customElements.define('date-axis', DateAxis);
customElements.define('quote-panel', QuotePanel);
customElements.define('side-bar', SideBar);
customElements.define('status-bar', StatusBar);
customElements.define('brand-mark', BrandMark);
</script>
</body>
</html>
